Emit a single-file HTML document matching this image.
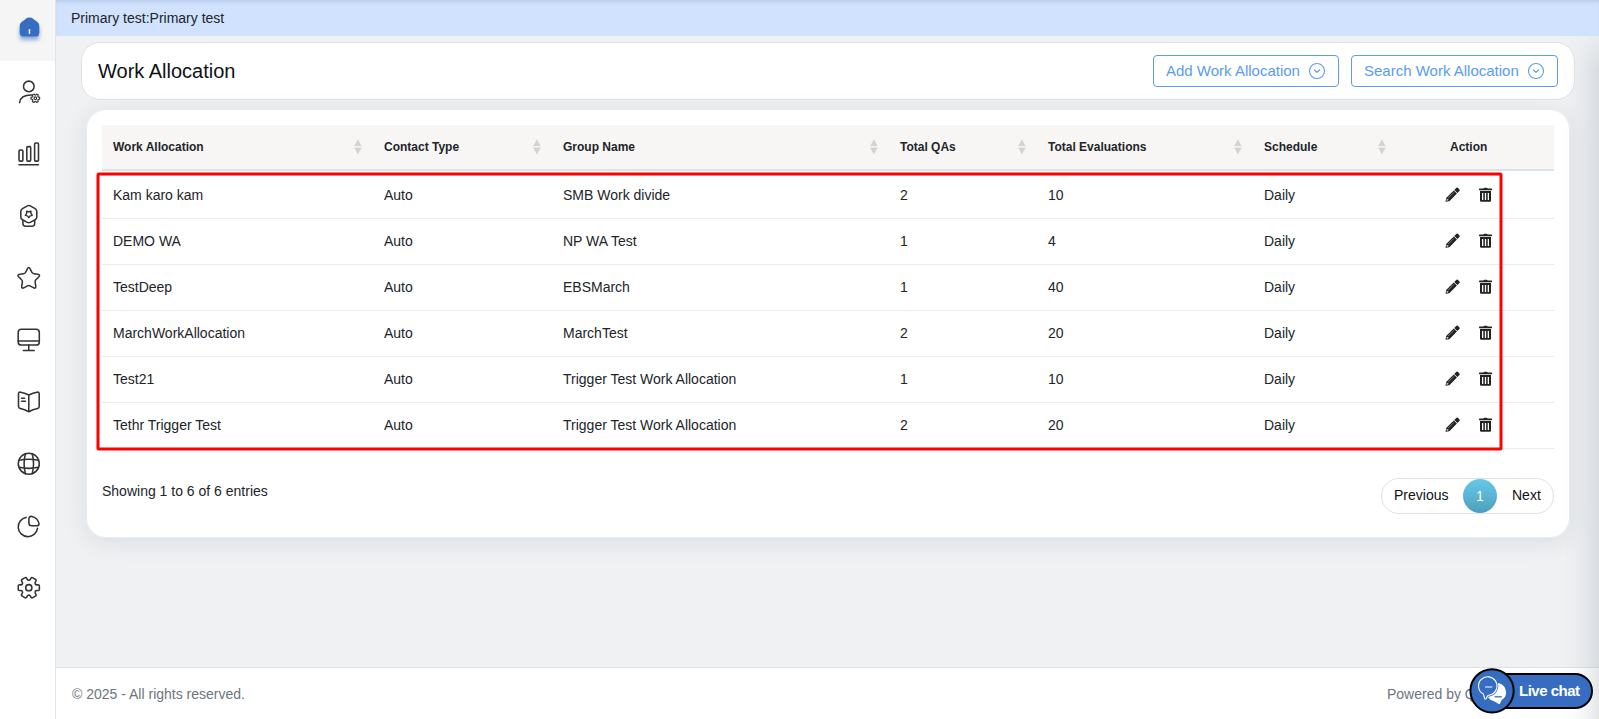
<!DOCTYPE html>
<html lang="en">
<head>
<meta charset="utf-8">
<title>Work Allocation</title>
<style>
*{box-sizing:border-box;margin:0;padding:0}
html,body{width:1599px;height:719px;overflow:hidden}
body{font-family:"Liberation Sans",Arial,sans-serif;background:#eff1f3;color:#212529;position:relative;font-size:14px}
.abs{position:absolute}
#side{position:absolute;left:0;top:0;width:56px;height:719px;background:#fff;border-right:1px solid #e0e4e8}
#side .top{position:absolute;left:0;top:0;width:55px;height:61px;background:#f5f5f5}
#side svg{position:absolute;overflow:visible}
#topbar{position:absolute;left:56px;top:0;width:1543px;height:36px;background:#d0e2fd;box-shadow:inset 0 4px 5px -3px rgba(120,140,180,.35)}
#topbar span{position:absolute;left:15px;top:10px;font-size:14px;line-height:16px;color:#212529}
#rshadow{position:absolute;right:0;top:36px;width:36px;height:683px;background:linear-gradient(to right,rgba(150,158,170,0) 0%,rgba(150,158,170,.04) 35%,rgba(150,158,170,.12) 65%,rgba(150,158,170,.26) 100%);-webkit-mask-image:linear-gradient(to bottom,rgba(0,0,0,.25) 0,#000 36px);mask-image:linear-gradient(to bottom,rgba(0,0,0,.25) 0,#000 36px)}
#hcard{position:absolute;left:81px;top:42px;width:1494px;height:58px;background:#fff;border:1px solid #dfe3e8;border-radius:19px}
#hcard h1{position:absolute;left:16px;top:16px;font-size:20px;line-height:24px;font-weight:400;color:#0f1114}
.btn{position:absolute;top:12px;height:32px;border:1px solid #5a9cf0;border-radius:4px;color:#5a9cf0;font-size:15px;line-height:30px;padding-left:12px;background:#fff;white-space:nowrap}
.btn svg{position:absolute;top:6px}
#tcard{position:absolute;left:86px;top:109px;width:1484px;height:429px;background:#fff;border-radius:20px;box-shadow:inset 0 0 0 1px #e8ebee,0 4px 24px rgba(34,41,47,.095)}
#thead{position:absolute;left:16px;top:16px;width:1452px;height:46px;background:#f7f6f5;border-bottom:2px solid #dee2e6}
#thead b{position:absolute;top:15px;font-size:12px;line-height:14px;font-weight:700;color:#212529;white-space:nowrap}
.sort{position:absolute;top:14.2px;width:7.6px;height:15.2px;margin-left:.1px}
.sort:before,.sort:after{content:"";position:absolute;left:0;width:7.6px;height:7px;background:#d2d2d2}
.sort:before{top:0;clip-path:polygon(50% 0,100% 100%,0 100%)}
.sort:after{top:8.2px;clip-path:polygon(0 0,100% 0,50% 100%)}
.row{position:absolute;left:16px;width:1452px;height:46px;border-bottom:1px solid #e9ebef}
.row span{position:absolute;top:14px;font-size:14px;line-height:16px;color:#212529;white-space:nowrap}
.row svg{position:absolute}
#info{position:absolute;left:16px;top:374px;font-size:14px;line-height:16px;color:#212529}
#pag{position:absolute;left:1295px;top:369px;width:173px;height:36px;border:1px solid #dee2e6;border-radius:18px;font-size:14px;line-height:16px;color:#111}
#pag span{position:absolute;top:8px}
#pag i{position:absolute;left:81px;top:0px;width:34px;height:34px;border-radius:17px;background:linear-gradient(#67c9e8,#4d9fbe);color:#fff;font-style:normal;text-align:center;line-height:34px;font-size:14px}
#footer{position:absolute;left:56px;top:667px;width:1543px;height:52px;background:#fff;border-top:1px solid #dde1e6;font-size:14px;color:#6c757d}
#footer span{position:absolute;top:18px;line-height:16px;white-space:nowrap}
#chattxt{position:absolute;left:1519px;top:682px;font-size:15px;line-height:17px;font-weight:700;color:#fff;letter-spacing:-.5px;white-space:nowrap}
</style>
</head>
<body>
<div id="side"><div class="top"></div>
<!--SIDE-->
<svg id="sidesvg" width="56" height="719" viewBox="0 0 56 719" style="position:absolute;left:0;top:0">
<defs><filter id="hs" x="-50%" y="-50%" width="200%" height="220%"><feGaussianBlur stdDeviation="2"/></filter></defs>
<path d="M29.45 17.7 Q31 17.3 32.4 18.3 L37.4 22.1 Q39.3 23.5 39.3 25.9 L39.3 32.4 Q39.3 36.6 35.1 36.6 L23.9 36.6 Q19.7 36.6 19.7 32.4 L19.7 25.9 Q19.7 23.5 21.6 22.1 L26.6 18.3 Q28 17.3 29.45 17.7Z" fill="#366dc1" opacity=".55" filter="url(#hs)" transform="translate(0,3.5)"/>
<path d="M29.45 17.7 Q31 17.3 32.4 18.3 L37.4 22.1 Q39.3 23.5 39.3 25.9 L39.3 32.4 Q39.3 36.6 35.1 36.6 L23.9 36.6 Q19.7 36.6 19.7 32.4 L19.7 25.9 Q19.7 23.5 21.6 22.1 L26.6 18.3 Q28 17.3 29.45 17.7Z" fill="#366dc1"/>
<rect x="28.7" y="29" width="1.5" height="5" rx=".75" fill="#fff"/>
<g stroke="#333" stroke-width="1.55" fill="none" stroke-linecap="round" stroke-linejoin="round">
<circle cx="28.8" cy="86.4" r="5.3"/>
<path d="M19.6 102.6 C20.2 97.2 24.2 94.9 31.6 95"/>
</g>
<g stroke="#333" stroke-width="1.15" fill="none" stroke-linejoin="round"><path d="M39.05 97.10Q39.65 97.04 39.65 97.64L39.65 98.76Q39.65 99.36 39.05 99.30L38.83 99.27Q38.23 99.21 37.94 99.72L37.94 99.72Q37.64 100.23 37.99 100.72L38.13 100.90Q38.48 101.38 37.96 101.68L36.98 102.25Q36.46 102.55 36.22 102.00L36.13 101.79Q35.89 101.24 35.30 101.24L35.30 101.24Q34.71 101.24 34.47 101.79L34.38 102.00Q34.14 102.55 33.62 102.25L32.64 101.68Q32.12 101.38 32.47 100.90L32.61 100.72Q32.96 100.23 32.66 99.72L32.66 99.72Q32.37 99.21 31.77 99.27L31.55 99.30Q30.95 99.36 30.95 98.76L30.95 97.64Q30.95 97.04 31.55 97.10L31.77 97.13Q32.37 97.19 32.66 96.68L32.66 96.68Q32.96 96.17 32.61 95.68L32.47 95.50Q32.12 95.02 32.64 94.72L33.62 94.15Q34.14 93.85 34.38 94.40L34.47 94.61Q34.71 95.16 35.30 95.16L35.30 95.16Q35.89 95.16 36.13 94.61L36.22 94.40Q36.46 93.85 36.98 94.15L37.96 94.72Q38.48 95.02 38.13 95.50L37.99 95.68Q37.64 96.17 37.94 96.68L37.94 96.68Q38.23 97.19 38.83 97.13Z"/><circle cx="35.3" cy="98.2" r="1.3"/></g>
<g stroke="#333" stroke-width="1.55" fill="none" stroke-linecap="round" stroke-linejoin="round">
<rect x="19" y="150" width="3.9" height="11.1" rx="1.15"/>
<rect x="26.8" y="146.6" width="3.9" height="14.5" rx="1.15"/>
<rect x="34.6" y="143" width="3.9" height="18.1" rx="1.15"/>
<path d="M19 164.7H38.5"/>
</g>
<g stroke="#333" stroke-width="1.55" fill="none" stroke-linecap="round" stroke-linejoin="round">
<path d="M27.41 205.88Q28.80 205.10 30.19 205.88L35.14 208.67Q36.80 209.60 36.80 211.50L36.80 217.00Q36.80 218.90 35.12 219.78L30.22 222.36Q28.80 223.10 27.38 222.36L22.48 219.78Q20.80 218.90 20.80 217.00L20.80 211.50Q20.80 209.60 22.46 208.67Z"/>
<path d="M22.9 220.4 L22.9 223.6 Q22.9 226.3 25.6 226.3 L32 226.3 Q34.7 226.3 34.7 223.6 L34.7 220.4"/>
</g>
<path d="M29.07 217.48Q28.80 217.90 28.53 217.48L27.72 216.22Q27.51 215.88 27.12 215.78L25.67 215.40Q25.19 215.27 25.50 214.89L26.45 213.73Q26.71 213.42 26.68 213.02L26.60 211.52Q26.57 211.03 27.03 211.21L28.43 211.75Q28.80 211.90 29.17 211.75L30.57 211.21Q31.03 211.03 31.00 211.52L30.92 213.02Q30.89 213.42 31.15 213.73L32.10 214.89Q32.41 215.27 31.93 215.40L30.48 215.78Q30.09 215.88 29.88 216.22Z" stroke="#333" stroke-width="1.35" fill="none" stroke-linejoin="round"/>
<path d="M27.22 269.05Q28.75 265.90 30.28 269.05L31.85 272.27Q32.51 273.62 34.00 273.83L37.55 274.33Q41.02 274.81 38.50 277.24L35.92 279.74Q34.84 280.78 35.10 282.25L35.72 285.79Q36.33 289.24 33.24 287.59L30.07 285.90Q28.75 285.20 27.43 285.90L24.26 287.59Q21.17 289.24 21.78 285.79L22.40 282.25Q22.66 280.78 21.58 279.74L19.00 277.24Q16.48 274.81 19.95 274.33L23.50 273.83Q24.99 273.62 25.65 272.27Z" stroke="#333" stroke-width="1.55" fill="none" stroke-linecap="round" stroke-linejoin="round"/>
<g stroke="#333" stroke-width="1.55" fill="none" stroke-linecap="round" stroke-linejoin="round">
<rect x="18.2" y="329.3" width="21.1" height="15.8" rx="3.2"/>
<path d="M18.2 340.9H39.3M28.75 345.1V350.5M23.3 350.5H34.2"/>
</g>
<g stroke="#333" stroke-width="1.55" fill="none" stroke-linecap="round" stroke-linejoin="round">
<path d="M28.8 395 L24.6 393.2 L20.6 392.2 Q18.5 391.8 18.5 394 L18.5 406.6 Q18.5 408 20.3 408.6 L24.6 409.8 L28.8 411.8 L33 409.8 L37.6 408.6 Q39.2 408 39.2 406.6 L39.2 394 Q39.2 391.8 37 392.2 L33 393.2 Z M28.8 395V411.8"/>
<path d="M21.6 398.2H24.6M21.6 401.3H25.4"/>
</g>
<g stroke="#333" stroke-width="1.55" fill="none" stroke-linecap="round" stroke-linejoin="round">
<circle cx="28.8" cy="463.7" r="10.5"/>
<path d="M25.4 453.8 Q22.8 463.7 25.4 473.6M32.2 453.8 Q34.8 463.7 32.2 473.6"/>
<path d="M19.2 460.3 Q28.8 458.2 38.4 460.3M19.2 467.3 Q28.8 469.4 38.4 467.3"/>
</g>
<g stroke="#333" stroke-width="1.55" fill="none" stroke-linecap="round" stroke-linejoin="round">
<path d="M26.2 517.4 A9.7 9.7 0 1 0 37.5 528.3"/>
<path d="M28.9 519 Q28.9 516 31.9 516.4 A9.3 9.3 0 0 1 38.9 523.1 Q39.5 525.8 36.6 525.8 L31.7 525.8 Q28.9 525.8 28.9 523Z"/>
</g>
<g stroke="#333" stroke-width="1.55" fill="none" stroke-linecap="round" stroke-linejoin="round">
<path d="M37.78 584.82Q39.37 584.67 39.37 586.27L39.37 589.13Q39.37 590.73 37.78 590.58L37.39 590.54Q35.80 590.39 35.22 591.40L35.22 591.40Q34.63 592.42 35.56 593.72L35.78 594.04Q36.71 595.34 35.33 596.14L32.85 597.57Q31.46 598.37 30.80 596.92L30.64 596.56Q29.97 595.11 28.80 595.11L28.80 595.11Q27.63 595.11 26.96 596.56L26.80 596.92Q26.14 598.37 24.75 597.57L22.27 596.14Q20.89 595.34 21.82 594.04L22.04 593.72Q22.97 592.42 22.38 591.40L22.38 591.40Q21.80 590.39 20.21 590.54L19.82 590.58Q18.23 590.73 18.23 589.13L18.23 586.27Q18.23 584.67 19.82 584.82L20.21 584.86Q21.80 585.01 22.38 584.00L22.38 584.00Q22.97 582.98 22.04 581.68L21.82 581.36Q20.89 580.06 22.27 579.26L24.75 577.83Q26.14 577.03 26.80 578.48L26.96 578.84Q27.63 580.29 28.80 580.29L28.80 580.29Q29.97 580.29 30.64 578.84L30.80 578.48Q31.46 577.03 32.85 577.83L35.33 579.26Q36.71 580.06 35.78 581.36L35.56 581.68Q34.63 582.98 35.22 584.00L35.22 584.00Q35.80 585.01 37.39 584.86Z"/>
<circle cx="28.8" cy="587.7" r="3.1"/>
</g>
</svg>
<!--/SIDE-->
</div>
<div id="topbar"><span>Primary test:Primary test</span></div>
<div id="hcard"><h1>Work Allocation</h1>
<div class="btn" style="left:1071px;width:186px">Add Work Allocation<svg width="18" height="18" viewBox="0 0 18 18" style="left:154px"><circle cx="9" cy="9" r="7.5" fill="none" stroke="#5a9cf0" stroke-width="1.1"/><path d="M6.5 8L9 10.4L11.5 8" fill="none" stroke="#5a9cf0" stroke-width="1.2" stroke-linecap="round" stroke-linejoin="round"/></svg></div>
<div class="btn" style="left:1269px;width:207px">Search Work Allocation<svg width="18" height="18" viewBox="0 0 18 18" style="left:175px"><circle cx="9" cy="9" r="7.5" fill="none" stroke="#5a9cf0" stroke-width="1.1"/><path d="M6.5 8L9 10.4L11.5 8" fill="none" stroke="#5a9cf0" stroke-width="1.2" stroke-linecap="round" stroke-linejoin="round"/></svg></div>
</div>
<div id="tcard">
<div id="thead">
<b style="left:11px">Work Allocation</b><div class="sort" style="left:252px"></div>
<b style="left:282px">Contact Type</b><div class="sort" style="left:431px"></div>
<b style="left:461px">Group Name</b><div class="sort" style="left:768px"></div>
<b style="left:798px">Total QAs</b><div class="sort" style="left:916px"></div>
<b style="left:946px">Total Evaluations</b><div class="sort" style="left:1132px"></div>
<b style="left:1162px">Schedule</b><div class="sort" style="left:1276px"></div>
<b style="left:1348px">Action</b>
</div>
<div class="row" style="top:64px"><span style="left:11px">Kam karo kam</span><span style="left:282px">Auto</span><span style="left:461px">SMB Work divide</span><span style="left:798px">2</span><span style="left:946px">10</span><span style="left:1162px">Daily</span></div>
<div class="row" style="top:110px"><span style="left:11px">DEMO WA</span><span style="left:282px">Auto</span><span style="left:461px">NP WA Test</span><span style="left:798px">1</span><span style="left:946px">4</span><span style="left:1162px">Daily</span></div>
<div class="row" style="top:156px"><span style="left:11px">TestDeep</span><span style="left:282px">Auto</span><span style="left:461px">EBSMarch</span><span style="left:798px">1</span><span style="left:946px">40</span><span style="left:1162px">Daily</span></div>
<div class="row" style="top:202px"><span style="left:11px">MarchWorkAllocation</span><span style="left:282px">Auto</span><span style="left:461px">MarchTest</span><span style="left:798px">2</span><span style="left:946px">20</span><span style="left:1162px">Daily</span></div>
<div class="row" style="top:248px"><span style="left:11px">Test21</span><span style="left:282px">Auto</span><span style="left:461px">Trigger Test Work Allocation</span><span style="left:798px">1</span><span style="left:946px">10</span><span style="left:1162px">Daily</span></div>
<div class="row" style="top:294px"><span style="left:11px">Tethr Trigger Test</span><span style="left:282px">Auto</span><span style="left:461px">Trigger Test Work Allocation</span><span style="left:798px">2</span><span style="left:946px">20</span><span style="left:1162px">Daily</span></div>
<div id="info">Showing 1 to 6 of 6 entries</div>
<div id="pag"><span style="left:12px">Previous</span><i>1</i><span style="left:130px">Next</span></div>
</div>
<!--ACTS-->
<svg id="acts" width="60" height="260" viewBox="1440 180 60 260" style="position:absolute;left:1440px;top:180px">
<g transform="translate(0,0)" fill="#222"><g transform="translate(1445.5,201.8) rotate(-45)"><path d="M0 0L3.2 -2.25L13.9 -2.25L13.9 2.25L3.2 2.25Z"/><path d="M14.6 -2.25L17.4 -2.25Q18.6 -2.25 18.6 -1.1L18.6 1.1Q18.6 2.25 17.4 2.25L14.6 2.25Z"/><path d="M1.6 -0.5L3.1 -1.2L3.7 0.8L2.2 0.8Z" fill="#fff" opacity=".85"/><path d="M4.6 -1.0L12.6 -1.0L12.6 -0.5L4.6 -0.5Z" fill="#fff" opacity=".55"/></g><path d="M1483.6 189V188.6Q1483.6 187.7 1484.5 187.7H1486.5Q1487.4 187.7 1487.4 188.6V189Z"/><rect x="1479" y="188.6" width="13" height="1.6" rx=".4"/><path fill-rule="evenodd" d="M1480 191H1491V200.6Q1491 201.8 1489.8 201.8H1481.2Q1480 201.8 1480 200.6Z M1482 192.9V200H1483.3V192.9Z M1484.85 192.9V200H1486.15V192.9Z M1487.7 192.9V200H1489V192.9Z"/></g>
<g transform="translate(0,46)" fill="#222"><g transform="translate(1445.5,201.8) rotate(-45)"><path d="M0 0L3.2 -2.25L13.9 -2.25L13.9 2.25L3.2 2.25Z"/><path d="M14.6 -2.25L17.4 -2.25Q18.6 -2.25 18.6 -1.1L18.6 1.1Q18.6 2.25 17.4 2.25L14.6 2.25Z"/><path d="M1.6 -0.5L3.1 -1.2L3.7 0.8L2.2 0.8Z" fill="#fff" opacity=".85"/><path d="M4.6 -1.0L12.6 -1.0L12.6 -0.5L4.6 -0.5Z" fill="#fff" opacity=".55"/></g><path d="M1483.6 189V188.6Q1483.6 187.7 1484.5 187.7H1486.5Q1487.4 187.7 1487.4 188.6V189Z"/><rect x="1479" y="188.6" width="13" height="1.6" rx=".4"/><path fill-rule="evenodd" d="M1480 191H1491V200.6Q1491 201.8 1489.8 201.8H1481.2Q1480 201.8 1480 200.6Z M1482 192.9V200H1483.3V192.9Z M1484.85 192.9V200H1486.15V192.9Z M1487.7 192.9V200H1489V192.9Z"/></g>
<g transform="translate(0,92)" fill="#222"><g transform="translate(1445.5,201.8) rotate(-45)"><path d="M0 0L3.2 -2.25L13.9 -2.25L13.9 2.25L3.2 2.25Z"/><path d="M14.6 -2.25L17.4 -2.25Q18.6 -2.25 18.6 -1.1L18.6 1.1Q18.6 2.25 17.4 2.25L14.6 2.25Z"/><path d="M1.6 -0.5L3.1 -1.2L3.7 0.8L2.2 0.8Z" fill="#fff" opacity=".85"/><path d="M4.6 -1.0L12.6 -1.0L12.6 -0.5L4.6 -0.5Z" fill="#fff" opacity=".55"/></g><path d="M1483.6 189V188.6Q1483.6 187.7 1484.5 187.7H1486.5Q1487.4 187.7 1487.4 188.6V189Z"/><rect x="1479" y="188.6" width="13" height="1.6" rx=".4"/><path fill-rule="evenodd" d="M1480 191H1491V200.6Q1491 201.8 1489.8 201.8H1481.2Q1480 201.8 1480 200.6Z M1482 192.9V200H1483.3V192.9Z M1484.85 192.9V200H1486.15V192.9Z M1487.7 192.9V200H1489V192.9Z"/></g>
<g transform="translate(0,138)" fill="#222"><g transform="translate(1445.5,201.8) rotate(-45)"><path d="M0 0L3.2 -2.25L13.9 -2.25L13.9 2.25L3.2 2.25Z"/><path d="M14.6 -2.25L17.4 -2.25Q18.6 -2.25 18.6 -1.1L18.6 1.1Q18.6 2.25 17.4 2.25L14.6 2.25Z"/><path d="M1.6 -0.5L3.1 -1.2L3.7 0.8L2.2 0.8Z" fill="#fff" opacity=".85"/><path d="M4.6 -1.0L12.6 -1.0L12.6 -0.5L4.6 -0.5Z" fill="#fff" opacity=".55"/></g><path d="M1483.6 189V188.6Q1483.6 187.7 1484.5 187.7H1486.5Q1487.4 187.7 1487.4 188.6V189Z"/><rect x="1479" y="188.6" width="13" height="1.6" rx=".4"/><path fill-rule="evenodd" d="M1480 191H1491V200.6Q1491 201.8 1489.8 201.8H1481.2Q1480 201.8 1480 200.6Z M1482 192.9V200H1483.3V192.9Z M1484.85 192.9V200H1486.15V192.9Z M1487.7 192.9V200H1489V192.9Z"/></g>
<g transform="translate(0,184)" fill="#222"><g transform="translate(1445.5,201.8) rotate(-45)"><path d="M0 0L3.2 -2.25L13.9 -2.25L13.9 2.25L3.2 2.25Z"/><path d="M14.6 -2.25L17.4 -2.25Q18.6 -2.25 18.6 -1.1L18.6 1.1Q18.6 2.25 17.4 2.25L14.6 2.25Z"/><path d="M1.6 -0.5L3.1 -1.2L3.7 0.8L2.2 0.8Z" fill="#fff" opacity=".85"/><path d="M4.6 -1.0L12.6 -1.0L12.6 -0.5L4.6 -0.5Z" fill="#fff" opacity=".55"/></g><path d="M1483.6 189V188.6Q1483.6 187.7 1484.5 187.7H1486.5Q1487.4 187.7 1487.4 188.6V189Z"/><rect x="1479" y="188.6" width="13" height="1.6" rx=".4"/><path fill-rule="evenodd" d="M1480 191H1491V200.6Q1491 201.8 1489.8 201.8H1481.2Q1480 201.8 1480 200.6Z M1482 192.9V200H1483.3V192.9Z M1484.85 192.9V200H1486.15V192.9Z M1487.7 192.9V200H1489V192.9Z"/></g>
<g transform="translate(0,230)" fill="#222"><g transform="translate(1445.5,201.8) rotate(-45)"><path d="M0 0L3.2 -2.25L13.9 -2.25L13.9 2.25L3.2 2.25Z"/><path d="M14.6 -2.25L17.4 -2.25Q18.6 -2.25 18.6 -1.1L18.6 1.1Q18.6 2.25 17.4 2.25L14.6 2.25Z"/><path d="M1.6 -0.5L3.1 -1.2L3.7 0.8L2.2 0.8Z" fill="#fff" opacity=".85"/><path d="M4.6 -1.0L12.6 -1.0L12.6 -0.5L4.6 -0.5Z" fill="#fff" opacity=".55"/></g><path d="M1483.6 189V188.6Q1483.6 187.7 1484.5 187.7H1486.5Q1487.4 187.7 1487.4 188.6V189Z"/><rect x="1479" y="188.6" width="13" height="1.6" rx=".4"/><path fill-rule="evenodd" d="M1480 191H1491V200.6Q1491 201.8 1489.8 201.8H1481.2Q1480 201.8 1480 200.6Z M1482 192.9V200H1483.3V192.9Z M1484.85 192.9V200H1486.15V192.9Z M1487.7 192.9V200H1489V192.9Z"/></g>
</svg>
<!--/ACTS-->
<svg id="redbox" width="1599" height="719" style="position:absolute;left:0;top:0;pointer-events:none"><rect x="98" y="174" width="1403" height="275" rx="1" fill="none" stroke="#fe0000" stroke-width="3" stroke-linejoin="round"/></svg>
<div id="footer"><span style="left:16px">© 2025 - All rights reserved.</span><span style="left:1331px">Powered by QEval</span></div>
<div id="rshadow"></div>
<!--CHAT-->
<svg id="chatsvg" width="140" height="54" viewBox="1460 665 140 54" style="position:absolute;left:1460px;top:665px">
<rect x="1480" y="673.9" width="112" height="34" rx="17" fill="#376dc1" stroke="#000" stroke-width="2"/>
<circle cx="1492.05" cy="690.85" r="21.65" fill="#376dc1" stroke="#000" stroke-width="2"/>
<path d="M1496.4 682.9 A9.3 9.3 0 0 1 1501.7 700 L1500 703.4 Q1499.4 704.4 1498.4 703.8 L1494.6 701.4 A9.3 9.3 0 0 1 1496.4 682.9Z" fill="#fff"/>
<path id="fb" d="M1490.4 694.8 A9.2 9.2 0 1 0 1483.4 694.1 L1484.7 698.6 Q1485.3 699.9 1486.1 698.7 L1487.8 695.5 Q1489.2 695.3 1490.4 694.8Z" fill="#376dc1" stroke="#376dc1" stroke-width="2.6" stroke-linejoin="round"/>
<path d="M1490.4 694.8 A9.2 9.2 0 1 0 1483.4 694.1 L1484.7 698.6 Q1485.3 699.9 1486.1 698.7 L1487.8 695.5 Q1489.2 695.3 1490.4 694.8Z" fill="none" stroke="#fff" stroke-width="1.1" stroke-linejoin="round"/>
<rect x="1485" y="686.2" width="7.4" height="1.5" rx=".4" fill="#b4cbec"/>
<rect x="1494.5" y="696" width="7.4" height="1.5" rx=".4" fill="#4a86d6"/>
</svg>
<div id="chattxt">Live chat</div>
<!--/CHAT-->
</body>
</html>
